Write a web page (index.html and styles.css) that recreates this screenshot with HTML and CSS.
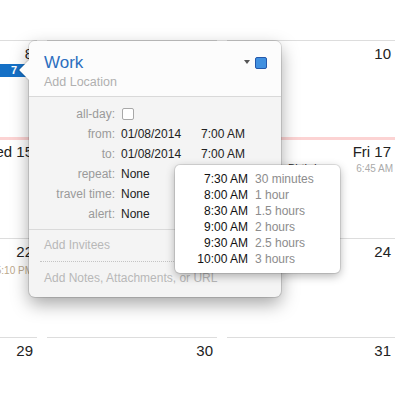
FILE: index.html
```html
<!DOCTYPE html>
<html lang="en">
<head>
    <meta charset="UTF-8">
    <title>Calendar - Work</title>
    <link rel="stylesheet" href="styles.css">
</head>
<body>
    <div class="calendar">
        <div class="week first">
            <div class="day">
                <div class="num">8</div>
                <div class="event selected">7</div>
            </div>
            <div class="day"><div class="num">9</div></div>
            <div class="day"><div class="num">10</div></div>
        </div>
        <div class="week current">
            <div class="day"><div class="num">Wed 15</div></div>
            <div class="day"><div class="num">Thu 16</div></div>
            <div class="day">
                <div class="num">Fri 17</div>
                <div class="event">
                    <span class="event-name">Birthday</span>
                    <span class="event-time">6:45 AM</span>
                </div>
            </div>
        </div>
        <div class="week">
            <div class="day">
                <div class="num">22</div>
                <div class="event late">
                    <span class="event-time warm">5:10 PM</span>
                </div>
            </div>
            <div class="day"><div class="num">23</div></div>
            <div class="day"><div class="num">24</div></div>
        </div>
        <div class="week last">
            <div class="day"><div class="num">29</div></div>
            <div class="day"><div class="num">30</div></div>
            <div class="day"><div class="num">31</div></div>
        </div>
    </div>

    <div class="popover">
        <div class="popover-header">
            <div class="title-row">
                <span class="title">Work</span>
                <span class="calendar-pick">
                    <span class="caret"></span>
                    <span class="swatch"></span>
                </span>
            </div>
            <div class="location">Add Location</div>
        </div>
        <div class="details">
            <div class="field">
                <span class="label">all-day:</span>
                <span class="value"><span class="checkbox"></span></span>
            </div>
            <div class="field">
                <span class="label">from:</span>
                <span class="value"><span class="date">01/08/2014</span>7:00 AM</span>
            </div>
            <div class="field">
                <span class="label">to:</span>
                <span class="value"><span class="date">01/08/2014</span>7:00 AM</span>
            </div>
            <div class="field">
                <span class="label">repeat:</span>
                <span class="value">None</span>
            </div>
            <div class="field">
                <span class="label">travel time:</span>
                <span class="value">None</span>
            </div>
            <div class="field">
                <span class="label">alert:</span>
                <span class="value">None</span>
            </div>
        </div>
        <div class="extra invitees">Add Invitees</div>
        <div class="extra notes">Add Notes, Attachments, or URL</div>
    </div>

    <div class="time-menu">
        <div class="time-item"><span class="time">7:30 AM</span><span class="length">30 minutes</span></div>
        <div class="time-item"><span class="time">8:00 AM</span><span class="length">1 hour</span></div>
        <div class="time-item"><span class="time">8:30 AM</span><span class="length">1.5 hours</span></div>
        <div class="time-item"><span class="time">9:00 AM</span><span class="length">2 hours</span></div>
        <div class="time-item"><span class="time">9:30 AM</span><span class="length">2.5 hours</span></div>
        <div class="time-item"><span class="time">10:00 AM</span><span class="length">3 hours</span></div>
    </div>
</body>
</html>
```

FILE: styles.css
```css
body {
    margin: 0;
    width: 395px;
    height: 395px;
    overflow: hidden;
    background: #fff;
    font-family: "Liberation Sans", Arial, sans-serif;
    color: #222;
}

.calendar {
    padding-top: 40px;
}

.week {
    display: grid;
    grid-template-columns: 37px 170px 168px;
    column-gap: 10px;
    height: 99px;
}

.week.first {
    height: 97px;
}

.week.current {
    height: 101px;
    border-top: 3px solid #fcd3d3;
    box-sizing: border-box;
}

.week.last {
    height: 58px;
}

.day {
    border-top: 1px solid #dddddd;
    padding-top: 4px;
    overflow: hidden;
}

.week.current .day {
    border-top: none;
    padding-top: 3px;
}

.num {
    display: flex;
    justify-content: flex-end;
    padding-right: 4px;
    font-size: 15px;
    line-height: 18px;
    white-space: nowrap;
}

.event {
    display: flex;
    justify-content: flex-end;
    padding-right: 2px;
    font-size: 10px;
    line-height: 13px;
    white-space: nowrap;
}

.event.selected {
    justify-content: flex-start;
    margin-top: 1px;
    padding-left: 11px;
    background: #1570c6;
    color: #fff;
    font-size: 11px;
    font-weight: bold;
}

.event.late {
    margin-top: 3px;
    padding-right: 4px;
}

.event-name {
    flex: 1;
    padding-left: 61px;
    font-size: 11px;
    color: #333;
}

.event-time {
    color: #aaaaaa;
}

.event-time.warm {
    color: #bba88c;
}

.week.current .event {
    margin-top: 1px;
}

/* popover */
.popover {
    position: absolute;
    left: 29px;
    top: 41px;
    width: 252px;
    height: 256px;
    background: #f4f4f4;
    border-radius: 6px;
    box-shadow: 0 0 0 1px rgba(0, 0, 0, 0.12), 0 7px 18px rgba(0, 0, 0, 0.35);
}

.popover::before {
    content: "";
    position: absolute;
    left: -7px;
    top: 22px;
    width: 14px;
    height: 14px;
    background: #fcfcfc;
    transform: rotate(45deg);
    box-shadow: -1px 1px 1px rgba(0, 0, 0, 0.12);
}

.popover-header {
    position: relative;
    height: 56px;
    box-sizing: border-box;
    padding: 12px 14px 0 15px;
    background: #fcfcfc;
    border-bottom: 1px solid #d9d9d9;
    border-radius: 6px 6px 0 0;
}

.title-row {
    display: flex;
    align-items: center;
    justify-content: space-between;
    height: 20px;
}

.title {
    font-size: 17px;
    color: #2c6fbf;
}

.calendar-pick {
    display: flex;
    align-items: center;
}

.caret {
    width: 0;
    height: 0;
    border-left: 3px solid transparent;
    border-right: 3px solid transparent;
    border-top: 4px solid #555;
    margin: -2px 5px 0 0;
}

.swatch {
    width: 10px;
    height: 10px;
    background: #4090e0;
    border: 1px solid #2558aa;
    border-radius: 2px;
}

.location {
    margin-top: 1px;
    font-size: 12.5px;
    line-height: 16px;
    color: #b0b0b0;
}

.details {
    padding: 7px 0 5px;
    border-bottom: 1px solid #dadada;
}

.field {
    display: grid;
    grid-template-columns: 86px 1fr;
    column-gap: 6px;
    font-size: 12px;
    line-height: 20px;
}

.label {
    text-align: right;
    color: #9a9a9a;
}

.value {
    display: flex;
    align-items: center;
    color: #222;
}

.date {
    width: 80px;
}

.checkbox {
    width: 10px;
    height: 10px;
    margin-left: 1px;
    background: #fff;
    border: 1px solid #a8a8a8;
    border-radius: 2px;
}

.extra {
    margin: 0 11px;
    padding-left: 4px;
    font-size: 12px;
    line-height: 16px;
    color: #b8b8b8;
}

.invitees {
    height: 32px;
    box-sizing: border-box;
    padding-top: 7px;
    border-bottom: 1px dotted #c4c4c4;
}

.notes {
    padding-top: 8px;
}

/* duration menu */
.time-menu {
    position: absolute;
    left: 175px;
    top: 165px;
    width: 165px;
    height: 108px;
    box-sizing: border-box;
    padding: 6px 0;
    background: #fff;
    border-radius: 5px;
    box-shadow: 0 0 0 1px rgba(0, 0, 0, 0.1), 0 3px 10px rgba(0, 0, 0, 0.3);
}

.time-item {
    display: grid;
    grid-template-columns: 73px 1fr;
    column-gap: 7px;
    font-size: 12px;
    line-height: 16px;
}

.time {
    text-align: right;
    color: #111;
}

.length {
    color: #8c8c8c;
}
```
